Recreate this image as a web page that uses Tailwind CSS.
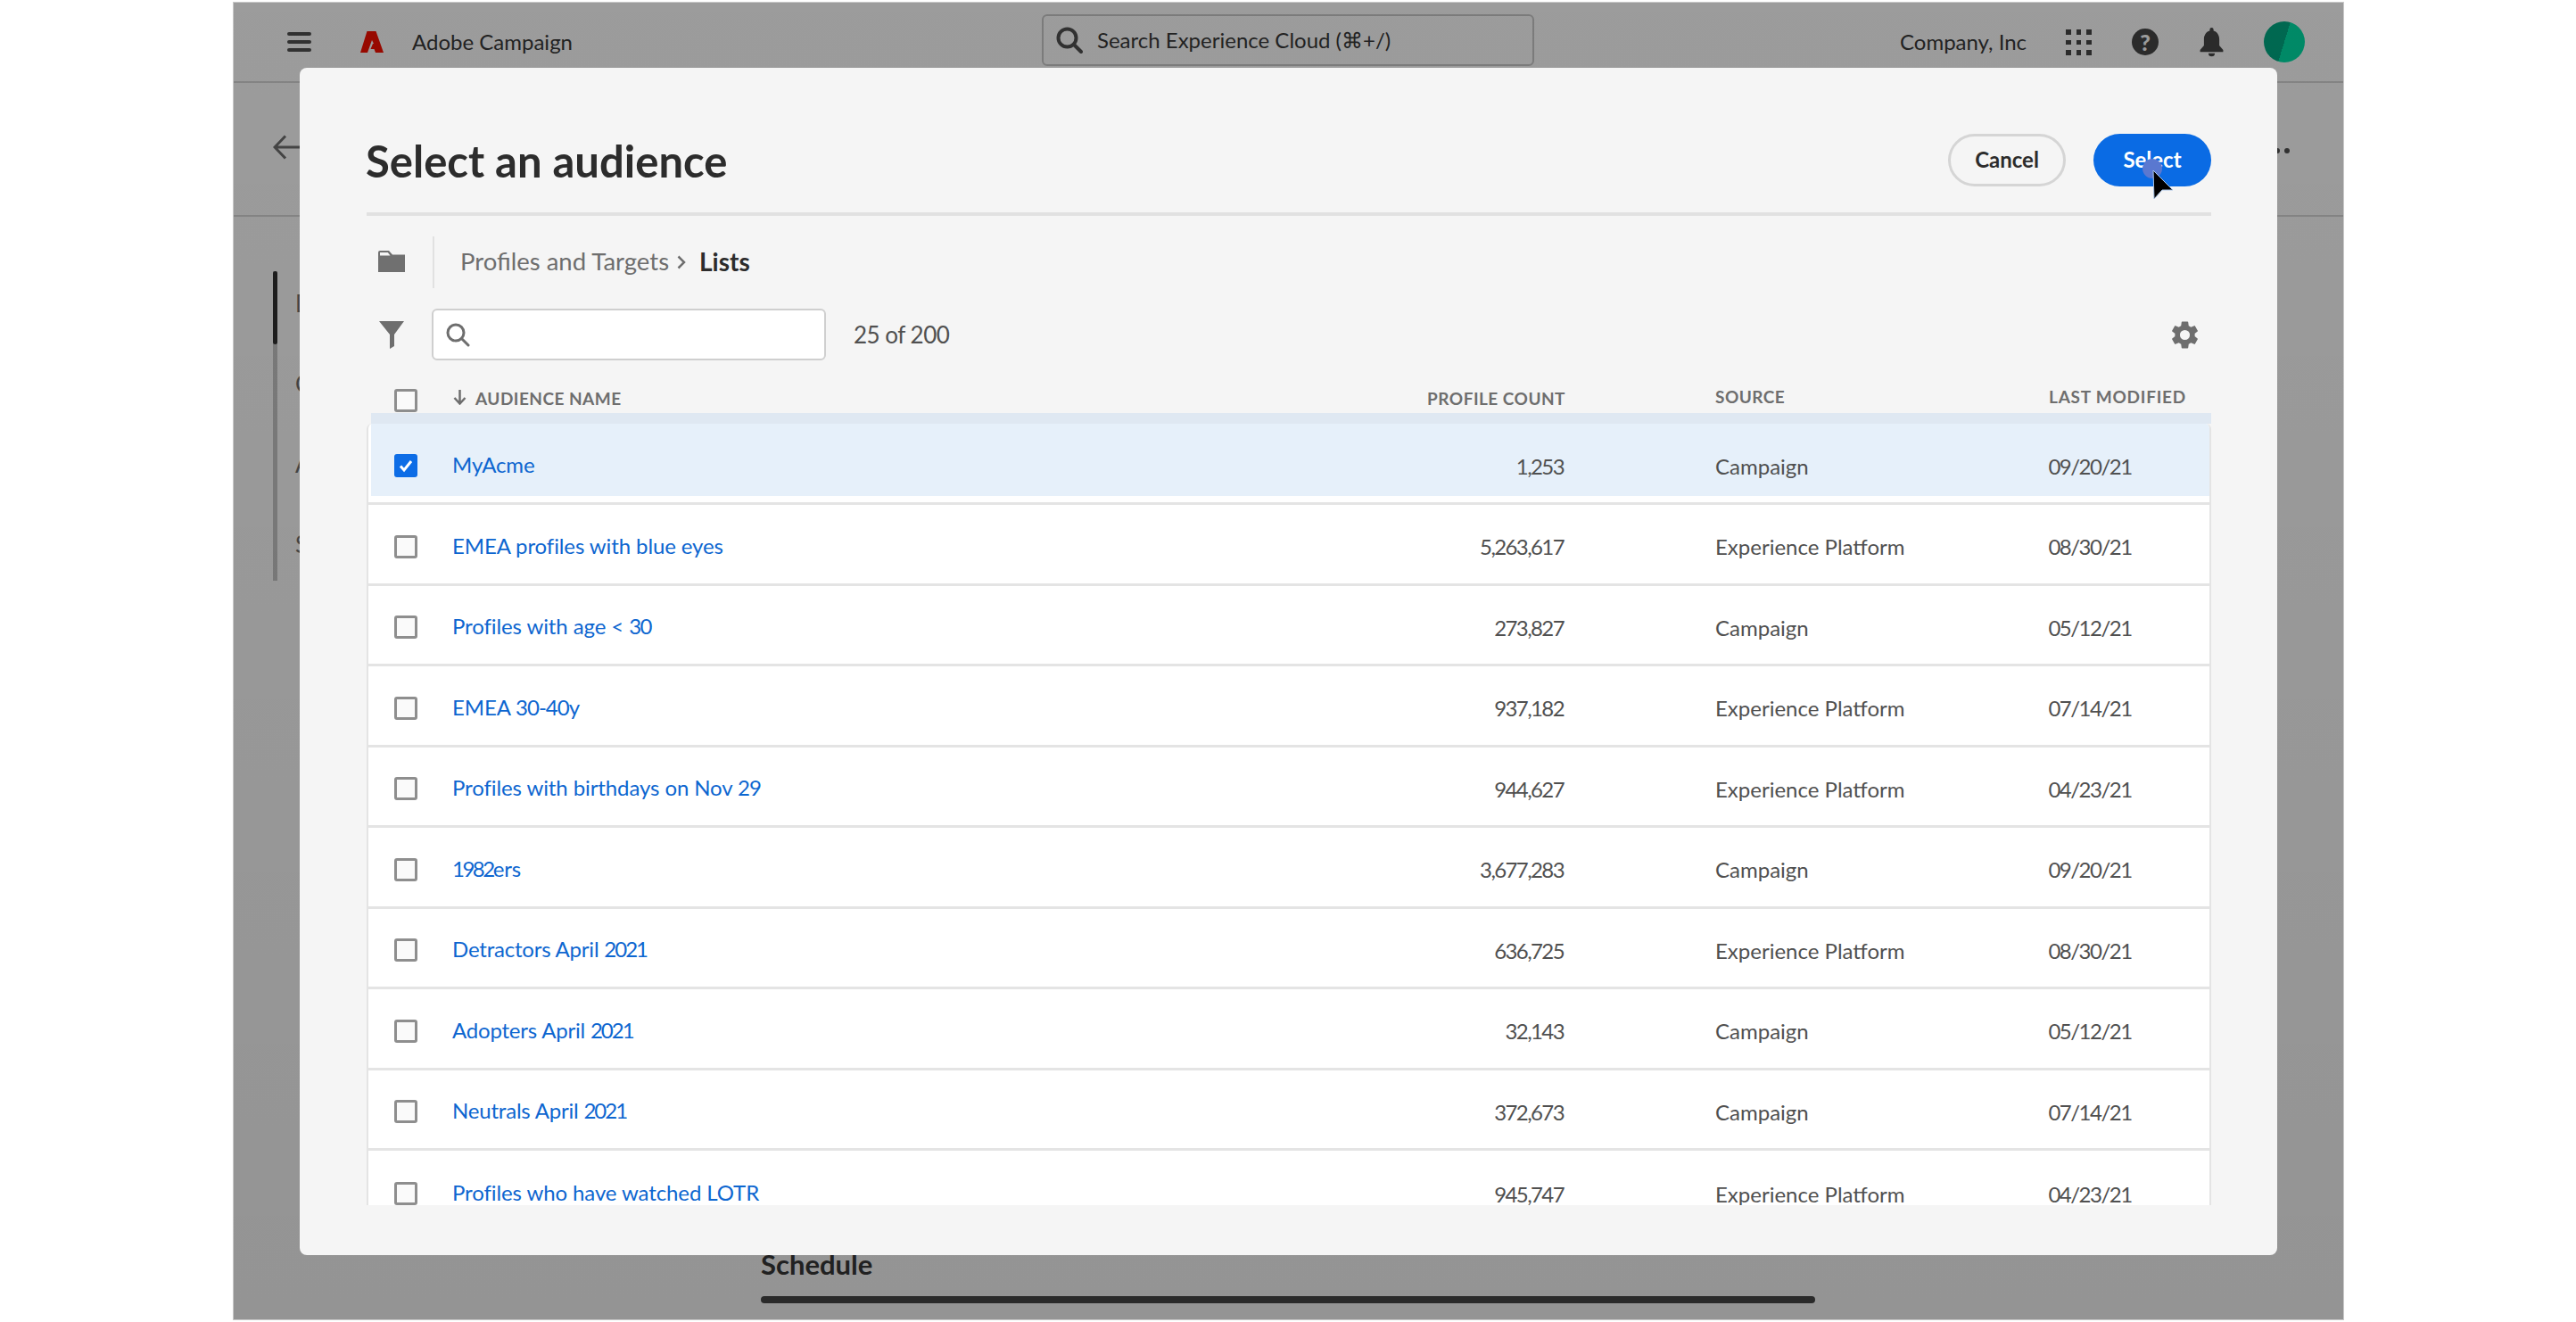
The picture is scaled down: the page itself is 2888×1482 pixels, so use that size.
<!DOCTYPE html>
<html lang="en">
<head>
  <meta charset="UTF-8" />
  <title>Select an audience</title>
  <script src="https://cdn.jsdelivr.net/npm/@tailwindcss/browser@4"></script>
</head>
<body class="bg-white font-['Lato','Liberation_Sans',sans-serif]">
  <div class="relative ml-[261px] mt-[2px] w-[2367px] h-[1478px] border border-[#c8c8c8] overflow-hidden bg-white flex flex-col text-[#383838]">

    <!-- top nav -->
    <header class="h-[90px] shrink-0 border-b-2 border-[#d8d8d8] flex items-center">
      <div class="ml-[60px] w-[27px] h-[22px] flex flex-col justify-between">
        <span class="h-[4px] bg-[#505050] rounded-full"></span>
        <span class="h-[4px] bg-[#505050] rounded-full"></span>
        <span class="h-[4px] bg-[#505050] rounded-full"></span>
      </div>
      <svg class="ml-[55px] w-[26px] h-[24px]" viewBox="0 0 26 24"><path fill="#f80f00" d="M7.500 0h10L26 24h-9l-1.500-4h-4l2.500-6h1L13 10 8 24H0z"/></svg>
      <span class="ml-[32px] w-[200px] text-[24px] leading-none whitespace-nowrap">Adobe Campaign</span>
      <div class="ml-[506px] w-[552px] h-[58px] border-2 border-[#cacaca] rounded-[6px] flex items-center pl-[14px] mb-[4px] shrink-0">
        <svg class="w-[30px] h-[30px]" viewBox="0 0 30 30" fill="none" stroke="#505050" stroke-width="4"><circle cx="12.500" cy="12.500" r="10"/><path d="M20 20l8 8" stroke-linecap="round"/></svg>
        <span class="ml-[16px] text-[24px] leading-none whitespace-nowrap">Search Experience Cloud (⌘+/)</span>
      </div>
      <span class="ml-[410px] text-[24px] leading-none whitespace-nowrap">Company, Inc</span>
      <div class="absolute left-[2054px] top-[30px] w-[29px] h-[29px] grid grid-cols-3 gap-[6px]">
        <span class="bg-[#464646]"></span><span class="bg-[#464646]"></span><span class="bg-[#464646]"></span>
        <span class="bg-[#464646]"></span><span class="bg-[#464646]"></span><span class="bg-[#464646]"></span>
        <span class="bg-[#464646]"></span><span class="bg-[#464646]"></span><span class="bg-[#464646]"></span>
      </div>
      <div class="absolute left-[2128px] top-[29px] w-[30px] h-[30px] rounded-full bg-[#464646] text-white text-[25px] font-black leading-[30px] text-center">?</div>
      <svg class="absolute left-[2204px] top-[28px] w-[27px] h-[33px]" viewBox="3 1 18 23"><path fill="#464646" d="M12 1a1.500 1.500 0 0 0-1.500 1.500v.9C7.600 4.200 6 7 6 10v5l-3 3.500V20h18v-1.500L18 15v-5c0-3-1.600-5.800-4.500-6.600v-.9A1.500 1.500 0 0 0 12 1zM9.500 21a2.500 2.500 0 0 0 5 0z"/></svg>
      <div class="absolute left-[2276px] top-[21px] w-[46px] h-[46px] rounded-full bg-[linear-gradient(107deg,#00aa84_50%,#00e1a8_50%)]"></div>
    </header>

    <!-- page title bar -->
    <div class="h-[150px] shrink-0 border-b-2 border-[#d8d8d8] flex items-center justify-between pl-[44px] pr-[60px]">
      <svg class="w-[40px] h-[28px] mb-[5px]" viewBox="0 0 40 28" fill="none" stroke="#707070" stroke-width="3"><path d="M14 1.500L2 14l12 12.500M2 14h38"/></svg>
      <div class="flex gap-[5px] mt-[4px]">
        <span class="w-[6px] h-[6px] rounded-full bg-[#505050]"></span>
        <span class="w-[6px] h-[6px] rounded-full bg-[#505050]"></span>
        <span class="w-[6px] h-[6px] rounded-full bg-[#505050]"></span>
      </div>
    </div>

    <!-- page body -->
    <div class="flex-1 flex">
      <div class="ml-[44px] mt-[61px] w-[5px] h-[347px] bg-[#c8c8c8] shrink-0">
        <div class="h-[82px] bg-[#303030] rounded-full"></div>
      </div>
      <div class="ml-[20px] mt-[82px] w-[522px] shrink-0 flex flex-col gap-[60px] text-[26px] leading-[30px] text-[#707070]">
        <span>Details</span><span>Content</span><span>Audience</span><span>Schedule</span>
      </div>
      <div class="flex-1 flex flex-col justify-end pb-[18px] pr-[592px]">
        <span class="text-[31px] font-bold leading-none text-[#383838]">Schedule</span>
        <div class="mt-[20px] h-[8px] bg-[#484848] rounded-full"></div>
      </div>
    </div>

    <!-- scrim -->
    <div class="absolute inset-0 bg-linear-to-b from-black/39 to-black/42"></div>

    <!-- modal -->
    <section class="absolute left-[74px] top-[73px] w-[2217px] h-[1331px] bg-[#f5f5f5] rounded-[8px] pl-[75px] pr-[74px] text-[#505050]">
      <div class="h-[166px] pt-[46px] flex items-center justify-between border-b-4 border-[#e1e1e1]">
        <h1 class="text-[49px] font-bold leading-none text-[#2c2c2c] whitespace-nowrap -ml-[1px]">Select an audience</h1>
        <div class="flex gap-[31px] -mt-[2px]">
          <button class="w-[132px] h-[59px] rounded-full border-[3px] border-[#d5d5d5] text-[24px] font-bold text-[#2c2c2c]">Cancel</button>
          <button class="relative w-[132px] h-[59px] rounded-full bg-[#0a6be4] text-[24px] font-bold text-white">Select
            <span class="absolute left-[55px] top-[28px] w-[22px] h-[22px] rounded-full bg-[#5a78d0]"></span>
            <svg class="absolute left-[66px] top-[40px] w-[26px] h-[36px]" viewBox="0 0 26 36"><path d="M1 1l1 32 9-10h12z" fill="#000" stroke="#a9c4e6" stroke-width="1"/></svg>
          </button>
        </div>
      </div>

      <!-- breadcrumb -->
      <div class="mt-[23px] h-[58px] flex items-center">
        <svg class="ml-[13px] w-[30px] h-[24px] mb-[2px]" viewBox="0 0 30 24"><path fill="#707070" fill-rule="evenodd" d="M0 2a2 2 0 0 1 2-2h10l4 4.500h14V24H0zM2 2v3.500h11.500L10.800 2z"/></svg>
        <span class="ml-[31px] w-[2px] h-[58px] bg-[#e1e1e1]"></span>
        <span class="ml-[29px] mb-[2px] text-[27.5px] leading-none text-[#6e6e6e] whitespace-nowrap">Profiles and Targets</span>
        <svg class="ml-[9px] w-[10px] h-[16px]" viewBox="0 0 10 16" fill="none" stroke="#6e6e6e" stroke-width="2.500"><path d="M1.500 1.500L8 8l-6.500 6.500"/></svg>
        <span class="ml-[15px] mb-[2px] text-[28px] font-bold leading-none text-[#2c2c2c]">Lists</span>
      </div>

      <!-- filter row -->
      <div class="mt-[23px] h-[58px] flex items-center">
        <svg class="ml-[14px] w-[28px] h-[31px]" viewBox="0 0 28 31"><path fill="#6e6e6e" d="M0 0h28L17 15v13l-5 3V15z"/></svg>
        <div class="ml-[31px] w-[442px] h-[58px] bg-white border-2 border-[#cfcfcf] rounded-[6px] flex items-center pl-[14px] shrink-0">
          <svg class="w-[27px] h-[27px]" viewBox="0 0 27 27" fill="none" stroke="#6e6e6e" stroke-width="3"><circle cx="11" cy="11" r="9"/><path d="M18 18l7 7" stroke-linecap="round"/></svg>
        </div>
        <span class="ml-[31px] text-[26px] tracking-[-0.5px] leading-none text-[#505050] whitespace-nowrap">25 of 200</span>
        <svg class="ml-auto mr-[14px] w-[31px] h-[31px]" viewBox="2 2 20 20"><path fill="#6e6e6e" d="M19.140 12.940c.04-.3.06-.61.06-.94 0-.32-.02-.64-.07-.94l2.030-1.580a.49.49 0 0 0 .12-.61l-1.920-3.320a.49.49 0 0 0-.59-.22l-2.390.96c-.5-.38-1.030-.7-1.620-.94l-.36-2.540a.48.48 0 0 0-.48-.41h-3.840a.48.48 0 0 0-.47.41l-.36 2.540c-.59.24-1.130.57-1.620.94l-2.390-.96a.49.49 0 0 0-.59.22L2.740 8.870a.48.48 0 0 0 .12.61l2.030 1.580c-.05.3-.09.63-.09.94s.02.64.07.94l-2.030 1.580a.49.49 0 0 0-.12.61l1.920 3.320c.12.22.37.29.59.22l2.390-.96c.5.38 1.030.7 1.620.94l.36 2.540c.05.24.24.41.48.41h3.840c.24 0 .44-.17.47-.41l.36-2.540c.59-.24 1.130-.56 1.620-.94l2.390.96c.22.08.47 0 .59-.22l1.920-3.320c.12-.22.07-.47-.12-.61l-2.010-1.580zM12 15.600A3.600 3.600 0 1 1 12 8.400a3.600 3.600 0 0 1 0 7.200z"/></svg>
      </div>

      <!-- column headers -->
      <div class="mt-[30px] h-[29px] grid grid-cols-[96px_793px_453px_170px_327px_190px] text-[19px] font-bold tracking-[0.025em] text-[#6e6e6e] leading-none">
        <div class="pl-[31px] pt-[2px]"><span class="block w-[26px] h-[26px] border-[3px] border-[#8e8e8e] rounded-[3px] bg-[#fafafa]"></span></div>
        <div class="flex items-start pt-[3px] ml-[1px] whitespace-nowrap">
          <svg class="w-[15px] h-[17px] mr-[10px]" viewBox="0 0 15 17" fill="none" stroke="#6e6e6e" stroke-width="2.500"><path d="M7.500 0v15M1.500 9l6 6.500 6-6.500"/></svg>AUDIENCE NAME
        </div>
        <div class="pt-[3px] -mr-[2px] text-right whitespace-nowrap">PROFILE COUNT</div>
        <div></div>
        <div class="pt-[1px]">SOURCE</div>
        <div class="pt-[1px] pl-[47px] whitespace-nowrap tracking-[0.04em]">LAST MODIFIED</div>
      </div>
      <div class="h-[12px] ml-[5px] bg-[#dfe8f2]"></div>

      <!-- table -->
      <div class="h-[876px] overflow-hidden bg-white rounded-t-[6px] border-x-2 border-[#e4e4e4] text-[24px] leading-none">
        <div class="h-[91px] pt-[6px] grid grid-cols-[94px_793px_453px_170px_327px_190px] items-center border-b-[3px] border-[#e4e4e4] bg-[linear-gradient(#e6f0fa,#e6f0fa)] bg-no-repeat bg-right-top bg-[length:calc(100%-3px)_81px]">
          <div class="pl-[29px]"><span class="flex items-center justify-center w-[26px] h-[26px] rounded-[3px] bg-[#0d6de6]"><svg class="w-[16px] h-[16px]" viewBox="0 0 16 16" fill="none" stroke="#fff" stroke-width="3"><path d="M2 8.500l4 4.500 8-10"/></svg></span></div>
          <a class="pb-[2px] tracking-[-0.1px] text-[#0d66d0]">MyAcme</a>
          <div class="pt-[1px] text-right tracking-[-1.6px]">1,253</div><div></div>
          <div class="pt-[1px]">Campaign</div>
          <div class="pt-[1px] pr-[4px] text-center tracking-[-1.5px]">09/20/21</div>
        </div>
        <div class="h-[90.5px] pt-[6px] grid grid-cols-[94px_793px_453px_170px_327px_190px] items-center border-b-[3px] border-[#e4e4e4]">
          <div class="pl-[29px]"><span class="block w-[26px] h-[26px] border-[3px] border-[#8e8e8e] rounded-[3px] bg-[#fafafa]"></span></div>
          <a class="pb-[2px] tracking-[-0.1px] text-[#0d66d0]">EMEA profiles with blue eyes</a>
          <div class="pt-[1px] text-right tracking-[-1.6px]">5,263,617</div><div></div>
          <div class="pt-[1px]">Experience Platform</div>
          <div class="pt-[1px] pr-[4px] text-center tracking-[-1.5px]">08/30/21</div>
        </div>
        <div class="h-[90.5px] pt-[6px] grid grid-cols-[94px_793px_453px_170px_327px_190px] items-center border-b-[3px] border-[#e4e4e4]">
          <div class="pl-[29px]"><span class="block w-[26px] h-[26px] border-[3px] border-[#8e8e8e] rounded-[3px] bg-[#fafafa]"></span></div>
          <a class="pb-[2px] tracking-[-0.1px] text-[#0d66d0]">Profiles with age &lt; <span class="tracking-[-1.5px]">30</span></a>
          <div class="pt-[1px] text-right tracking-[-1.6px]">273,827</div><div></div>
          <div class="pt-[1px]">Campaign</div>
          <div class="pt-[1px] pr-[4px] text-center tracking-[-1.5px]">05/12/21</div>
        </div>
        <div class="h-[90.5px] pt-[6px] grid grid-cols-[94px_793px_453px_170px_327px_190px] items-center border-b-[3px] border-[#e4e4e4]">
          <div class="pl-[29px]"><span class="block w-[26px] h-[26px] border-[3px] border-[#8e8e8e] rounded-[3px] bg-[#fafafa]"></span></div>
          <a class="pb-[2px] tracking-[-0.1px] text-[#0d66d0]">EMEA <span class="tracking-[-1px]">30-40</span>y</a>
          <div class="pt-[1px] text-right tracking-[-1.6px]">937,182</div><div></div>
          <div class="pt-[1px]">Experience Platform</div>
          <div class="pt-[1px] pr-[4px] text-center tracking-[-1.5px]">07/14/21</div>
        </div>
        <div class="h-[90.5px] pt-[6px] grid grid-cols-[94px_793px_453px_170px_327px_190px] items-center border-b-[3px] border-[#e4e4e4]">
          <div class="pl-[29px]"><span class="block w-[26px] h-[26px] border-[3px] border-[#8e8e8e] rounded-[3px] bg-[#fafafa]"></span></div>
          <a class="pb-[2px] tracking-[-0.1px] text-[#0d66d0]">Profiles with birthdays on Nov <span class="tracking-[-1px]">29</span></a>
          <div class="pt-[1px] text-right tracking-[-1.6px]">944,627</div><div></div>
          <div class="pt-[1px]">Experience Platform</div>
          <div class="pt-[1px] pr-[4px] text-center tracking-[-1.5px]">04/23/21</div>
        </div>
        <div class="h-[90.5px] pt-[6px] grid grid-cols-[94px_793px_453px_170px_327px_190px] items-center border-b-[3px] border-[#e4e4e4]">
          <div class="pl-[29px]"><span class="block w-[26px] h-[26px] border-[3px] border-[#8e8e8e] rounded-[3px] bg-[#fafafa]"></span></div>
          <a class="pb-[2px] tracking-[-0.1px] text-[#0d66d0]"><span class="tracking-[-2.5px]">1982</span>ers</a>
          <div class="pt-[1px] text-right tracking-[-1.6px]">3,677,283</div><div></div>
          <div class="pt-[1px]">Campaign</div>
          <div class="pt-[1px] pr-[4px] text-center tracking-[-1.5px]">09/20/21</div>
        </div>
        <div class="h-[90.5px] pt-[6px] grid grid-cols-[94px_793px_453px_170px_327px_190px] items-center border-b-[3px] border-[#e4e4e4]">
          <div class="pl-[29px]"><span class="block w-[26px] h-[26px] border-[3px] border-[#8e8e8e] rounded-[3px] bg-[#fafafa]"></span></div>
          <a class="pb-[2px] tracking-[-0.2px] text-[#0d66d0]">Detractors April <span class="tracking-[-2px]">2021</span></a>
          <div class="pt-[1px] text-right tracking-[-1.6px]">636,725</div><div></div>
          <div class="pt-[1px]">Experience Platform</div>
          <div class="pt-[1px] pr-[4px] text-center tracking-[-1.5px]">08/30/21</div>
        </div>
        <div class="h-[90.5px] pt-[6px] grid grid-cols-[94px_793px_453px_170px_327px_190px] items-center border-b-[3px] border-[#e4e4e4]">
          <div class="pl-[29px]"><span class="block w-[26px] h-[26px] border-[3px] border-[#8e8e8e] rounded-[3px] bg-[#fafafa]"></span></div>
          <a class="pb-[2px] tracking-[-0.2px] text-[#0d66d0]">Adopters April <span class="tracking-[-2px]">2021</span></a>
          <div class="pt-[1px] text-right tracking-[-1.6px]">32,143</div><div></div>
          <div class="pt-[1px]">Campaign</div>
          <div class="pt-[1px] pr-[4px] text-center tracking-[-1.5px]">05/12/21</div>
        </div>
        <div class="h-[90.5px] pt-[6px] grid grid-cols-[94px_793px_453px_170px_327px_190px] items-center border-b-[3px] border-[#e4e4e4]">
          <div class="pl-[29px]"><span class="block w-[26px] h-[26px] border-[3px] border-[#8e8e8e] rounded-[3px] bg-[#fafafa]"></span></div>
          <a class="pb-[2px] tracking-[-0.2px] text-[#0d66d0]">Neutrals April <span class="tracking-[-2px]">2021</span></a>
          <div class="pt-[1px] text-right tracking-[-1.6px]">372,673</div><div></div>
          <div class="pt-[1px]">Campaign</div>
          <div class="pt-[1px] pr-[4px] text-center tracking-[-1.5px]">07/14/21</div>
        </div>
        <div class="h-[90.5px] pt-[6px] grid grid-cols-[94px_793px_453px_170px_327px_190px] items-center">
          <div class="pl-[29px]"><span class="block w-[26px] h-[26px] border-[3px] border-[#8e8e8e] rounded-[3px] bg-[#fafafa]"></span></div>
          <a class="pb-[2px] tracking-[-0.1px] text-[#0d66d0]">Profiles who have watched LOTR</a>
          <div class="pt-[1px] text-right tracking-[-1.6px]">945,747</div><div></div>
          <div class="pt-[1px]">Experience Platform</div>
          <div class="pt-[1px] pr-[4px] text-center tracking-[-1.5px]">04/23/21</div>
        </div>
      </div>
    </section>
  </div>
</body>
</html>
